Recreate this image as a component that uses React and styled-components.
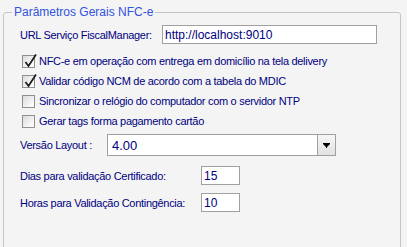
import styled, { createGlobalStyle } from "styled-components";

const GlobalStyle = createGlobalStyle`
    html, body {
        margin: 0;
        padding: 0;
        background: #f4f4f4;
        overflow: hidden;
    }
    body {
        font-family: "Liberation Sans", Arial, sans-serif;
        font-size: 11px;
        color: #000080;
    }
`;

const Page = styled.div`
    width: 407px;
    height: 247px;
    padding: 0 6px 0 3px;
    box-sizing: border-box;
    overflow: hidden;
`;

const GroupBox = styled.fieldset`
    margin: 0;
    padding: 0;
    border: 1px solid #c4c4c4;
    border-radius: 3px;
    min-height: 270px;
    box-sizing: border-box;
    legend{
        margin-left: 8px;
        padding: 0 2px;
        line-height: 24px;
        color: #3252e0;
        font-size: 12px;
    }
`;

const Content = styled.div`
    padding-left: 16px;
    letter-spacing: -0.3px;
`;

const Row = styled.div`
    display: flex;
    align-items: center;
    height: ${(p) => p.$h || 20}px;
    margin-top: ${(p) => p.$mt || 0}px;
`;

const Label = styled.label`
    width: ${(p) => (p.$w ? p.$w + "px" : "auto")};
    flex-shrink: 0;
    white-space: nowrap;
`;

const TextInput = styled.input`
    box-sizing: border-box;
    width: ${(p) => p.$w}px;
    height: 19px;
    border: 1px solid #a0a0a0;
    background: #fff;
    padding: 0 2px;
    margin: 0;
    font-family: "Liberation Sans", Arial, sans-serif;
    font-size: 12px;
    color: #000080;
    outline: none;
`;

const CheckList = styled.div`
    margin-top: 7px;
`;

const CheckRow = styled.label`
    display: flex;
    align-items: center;
    height: 20px;
    gap: 4px;
    padding-left: 2px;
    white-space: nowrap;
`;

const Box = styled.span`
    position: relative;
    width: 13px;
    height: 13px;
    box-sizing: border-box;
    border: 1px solid #8e8f8f;
    background: linear-gradient(135deg, #dcdcdc 0%, #f6f6f6 70%, #ffffff 100%);
    flex-shrink: 0;
    svg{
        position: absolute;
        left: 1px;
        top: -3px;
        overflow: visible;
    }
`;

const Select = styled.div`
    box-sizing: border-box;
    display: flex;
    width: 229px;
    height: 22px;
    border: 1px solid #a0a0a0;
    background: #fff;
    letter-spacing: 0;
    .value{
        flex: 1;
        display: flex;
        align-items: center;
        padding-left: 4px;
        font-size: 13px;
    }
    .button{
        width: 17px;
        border-left: 1px solid #a0a0a0;
        background: linear-gradient(#f6f6f6, #e2e2e2);
        display: flex;
        align-items: center;
        justify-content: center;
    }
`;

function Check({ checked, children }) {
    return (
        <CheckRow>
            <Box>
                {checked && (
                    <svg width="13" height="15" viewBox="0 0 13 15">
                        <path d="M1.5 9 L4.5 13 L12 1.5" fill="none" stroke="#1a1a1a" strokeWidth="1.7" />
                    </svg>
                )}
            </Box>
            {children}
        </CheckRow>
    );
}

export default function App() {
    return (
        <Page>
            <GlobalStyle />
            <GroupBox>
                <legend>Parâmetros Gerais NFC-e</legend>
                <Content>
                    <Row $h={19} $mt={1}>
                        <Label $w={142}>URL Serviço FiscalManager:</Label>
                        <TextInput $w={215} defaultValue="http://localhost:9010" />
                    </Row>
                    <CheckList>
                        <Check checked>NFC-e em operação com entrega em domicílio na tela delivery</Check>
                        <Check checked>Validar código NCM de acordo com a tabela do MDIC</Check>
                        <Check>Sincronizar o relógio do computador com o servidor NTP</Check>
                        <Check>Gerar tags forma pagamento cartão</Check>
                    </CheckList>
                    <Row $h={22} $mt={3}>
                        <Label $w={87}>Versão Layout :</Label>
                        <Select>
                            <span className="value">4.00</span>
                            <span className="button">
                                <svg width="7" height="5" viewBox="0 0 7 5">
                                    <path d="M0 0 H7 V1 L4 4 V5 H3 V4 L0 1 Z" fill="#000" />
                                </svg>
                            </span>
                        </Select>
                    </Row>
                    <Row $h={19} $mt={10}>
                        <Label $w={181}>Dias para validação Certificado:</Label>
                        <TextInput $w={39} defaultValue="15" />
                    </Row>
                    <Row $h={19} $mt={8}>
                        <Label $w={181}>Horas para Validação Contingência:</Label>
                        <TextInput $w={39} defaultValue="10" />
                    </Row>
                </Content>
            </GroupBox>
        </Page>
    );
}
